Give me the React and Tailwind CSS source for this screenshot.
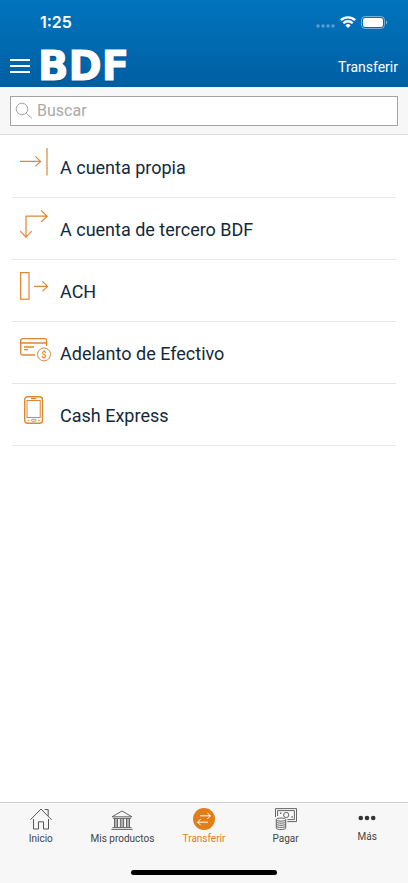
import { useState } from "react";

function OwnAccountIcon() {
  return (
    <svg viewBox="0 0 32 28" className="w-8 h-7" fill="none" stroke="#e08732" strokeWidth="1.2" aria-hidden="true">
      <path d="M0 13.4H20.5M15.4 8.4l5.2 5l-5.2 5M27 0v27.6" />
    </svg>
  );
}

function ThirdPartyIcon() {
  return (
    <svg viewBox="0 0 32 28" className="w-8 h-7" fill="none" stroke="#e08732" strokeWidth="1.2" aria-hidden="true">
      <path d="M6 27V6.2H27M21 .4l6.2 5.8L21 12M.3 21.2L6 27.2l5.8-6" />
    </svg>
  );
}

function AchIcon() {
  return (
    <svg viewBox="0 0 32 28" className="w-8 h-7" fill="none" stroke="#e08732" strokeWidth="1.2" aria-hidden="true">
      <rect x=".6" y=".6" width="8.4" height="26.6" />
      <path d="M14 14.4h13.4M22.4 9.4l5.2 5l-5.2 5" />
    </svg>
  );
}

function CashAdvanceIcon() {
  return (
    <svg viewBox="0 0 32 28" className="w-8 h-7" fill="none" stroke="#e08732" strokeWidth="1.4" aria-hidden="true">
      <path d="M15 21H2.8A2 2 0 0 1 .7 19V6.6a2 2 0 0 1 2-2H24.6a2 2 0 0 1 2 2V12M.7 9H26.6" />
      <path d="M4 13h10M4 15.6h4" />
      <circle cx="24" cy="20.4" r="6.5" strokeWidth="1" />
      <text x="24" y="23.8" textAnchor="middle" fontSize="9" fontWeight="500" fontFamily="Roboto, sans-serif" fill="#e08732" stroke="none">
        $
      </text>
    </svg>
  );
}

function PhoneIcon() {
  return (
    <svg viewBox="0 0 32 28" className="w-8 h-7" fill="none" stroke="#e08732" strokeWidth="1.4" aria-hidden="true">
      <rect x="4.7" y=".7" width="17.8" height="26.6" rx="3" />
      <rect x="7" y="4.5" width="13.2" height="17" strokeWidth="1" />
      <path d="M11 2.6h5.4" />
      <rect x="11.5" y="23.3" width="4.4" height="2" rx="1" strokeWidth="1" />
      <path d="M7.5 24.4h1.6M18.2 24.4h1.6" strokeWidth="1" />
    </svg>
  );
}

function HomeIcon() {
  return (
    <svg viewBox="0 0 22 22" className="size-[22px]" fill="none" stroke="#555" strokeWidth="1" aria-hidden="true">
      <path d="M.4 11.8L11 1l10.6 10.8M14.6 1.6h3.6v6.2" />
      <path d="M3.5 11v10h5v-7.2h5V21h5V11" />
    </svg>
  );
}

function BankIcon() {
  return (
    <svg viewBox="0 0 22 22" className="size-[22px]" fill="none" stroke="#666" strokeWidth="1" aria-hidden="true">
      <path d="M1 8.8L11 3l10 5.8zM2 10.4h18M1.4 19.6h19.2M.4 21.4h21.2" />
      <path d="M3.5 10.4v9M5 10.4v9M6.5 10.4v9M9.4 10.4v9M11 10.4v9M12.6 10.4v9M15.5 10.4v9M17 10.4v9M18.5 10.4v9" />
    </svg>
  );
}

function TransferIcon() {
  return (
    <svg viewBox="0 0 22 22" className="size-[22px]" fill="none" aria-hidden="true">
      <circle cx="11" cy="11" r="11" fill="#e27d17" />
      <path d="M7 7.8h10.4M14.4 4.8l3 3l-3 3M15 14.2H4.6M7.6 11.2l-3 3l3 3" stroke="#fff" strokeWidth="1" />
    </svg>
  );
}

function PayIcon() {
  return (
    <svg viewBox="0 0 22 22" className="size-[22px]" fill="none" stroke="#666" strokeWidth="1" aria-hidden="true">
      <path d="M.5 9V.6h21v13H12.4M2.6 8V2.6h16.8v9h-7" />
      <circle cx="11.2" cy="7" r="2.6" />
      <path d="M5 5.2h1.4M16.4 9h1.4" strokeWidth="1.6" />
      <ellipse cx="6" cy="11.6" rx="4.7" ry="1.6" fill="#f7f7f7" />
      <path d="M1.3 11.6V20c0 2 9.4 2 9.4 0v-8.4M1.3 13.7c0 2 9.4 2 9.4 0M1.3 15.8c0 2 9.4 2 9.4 0M1.3 17.9c0 2 9.4 2 9.4 0" />
    </svg>
  );
}

function MoreIcon() {
  return (
    <svg viewBox="0 0 22 20" className="w-[22px] h-5" fill="#333" aria-hidden="true">
      <circle cx="4.8" cy="10" r="2.3" />
      <circle cx="11" cy="10" r="2.3" />
      <circle cx="17.2" cy="10" r="2.3" />
    </svg>
  );
}

const options = [
  { label: "A cuenta propia", Icon: OwnAccountIcon },
  { label: "A cuenta de tercero BDF", Icon: ThirdPartyIcon },
  { label: "ACH", Icon: AchIcon },
  { label: "Adelanto de Efectivo", Icon: CashAdvanceIcon },
  { label: "Cash Express", Icon: PhoneIcon },
];

const tabs = [
  { label: "Inicio", Icon: HomeIcon },
  { label: "Mis productos", Icon: BankIcon },
  { label: "Transferir", Icon: TransferIcon },
  { label: "Pagar", Icon: PayIcon },
  { label: "Más", Icon: MoreIcon },
];

export default function App() {
  const [query, setQuery] = useState("");
  const [active, setActive] = useState("Transferir");

  const visible = options.filter((o) =>
    o.label.toLowerCase().includes(query.trim().toLowerCase())
  );

  return (
    <div className="min-h-screen flex flex-col bg-white font-[Roboto,sans-serif]">
      <header className="bg-gradient-to-b from-[#0074be] to-[#005fa2] text-white">
        <div className="h-11 flex items-center justify-between pl-10 pr-5">
          <span className="text-base font-semibold font-[Inter,sans-serif]">1:25</span>
          <div className="flex items-center gap-[5px]">
            <svg viewBox="0 0 19 12" className="w-[19px] h-3" fill="#5b9fd0" aria-hidden="true">
              <circle cx="2" cy="10" r="1.7" />
              <circle cx="7" cy="10" r="1.7" />
              <circle cx="12" cy="10" r="1.7" />
              <circle cx="17" cy="10" r="1.7" />
            </svg>
            <svg viewBox="0 0 16 12" className="w-4 h-3" fill="none" stroke="#fff" strokeWidth="2.3" aria-hidden="true">
              <path d="M.8 4.2a10.4 10.4 0 0 1 14.4 0M3.3 7.2a6.6 6.6 0 0 1 9.4 0" />
              <path d="M8 12L5.4 9.4a3.7 3.7 0 0 1 5.2 0z" fill="#fff" stroke="none" />
            </svg>
            <svg viewBox="0 0 27 13" className="w-[27px] h-[13px]" fill="none" aria-hidden="true">
              <rect x=".5" y=".5" width="23" height="12" rx="3.6" stroke="#fff" strokeOpacity=".45" />
              <rect x="2" y="2" width="20" height="9" rx="2.2" fill="#fff" />
              <path d="M25 4.6c1.7.6 1.7 3.2 0 3.8z" fill="#fff" fillOpacity=".5" />
            </svg>
          </div>
        </div>
        <div className="h-[43px] flex items-center px-[10px]">
          <button type="button" aria-label="Menú">
            <svg viewBox="0 0 20 16" className="w-5 h-4" stroke="#fff" strokeWidth="2" aria-hidden="true">
              <path d="M0 2h20M0 8h20M0 14h20" />
            </svg>
          </button>
          <span className="ml-2 text-[40px] leading-none font-bold font-['DejaVu_Sans',sans-serif] [-webkit-text-stroke:1px_white] [text-shadow:0_1px_2px_#00407a]">
            BDF
          </span>
          <h1 className="ml-auto pt-[2px] text-sm">Transferir</h1>
        </div>
      </header>

      <div className="bg-[#f7f7f7] border-b border-[#dcdcdc] px-[10px] pt-[9px] pb-2">
        <label className="flex items-center h-[30px] gap-1 pl-1 bg-white border border-[#a3a3a3]">
          <svg viewBox="0 0 18 18" className="size-[18px]" fill="none" stroke="#a8a8a8" strokeWidth="1" aria-hidden="true">
            <circle cx="7" cy="7" r="5.8" />
            <path d="M11.2 11.2l5.8 5.4" />
          </svg>
          <input
            type="text"
            aria-label="Buscar"
            placeholder="Buscar"
            value={query}
            onChange={(e) => setQuery(e.target.value)}
            className="flex-1 min-w-0 bg-transparent text-base text-[#14283c] placeholder-[#aaa] focus:outline-none"
          />
        </label>
      </div>

      <main className="flex-1 px-3 pt-px">
        <ul>
          {visible.map(({ label, Icon }) => (
            <li key={label} className="border-b border-[#e6e6e6]">
              <button
                type="button"
                className="w-full h-[61px] flex items-start gap-2 pl-2 pt-3 text-left"
              >
                <Icon />
                <span className="pt-[6px] text-lg text-[#14283c]">{label}</span>
              </button>
            </li>
          ))}
        </ul>
      </main>

      <footer className="bg-[#f7f7f7] border-t border-[#cfcfcf]">
        <nav className="grid grid-cols-5 pt-[5px] pb-6">
          {tabs.map(({ label, Icon }) => (
            <button
              key={label}
              type="button"
              onClick={() => setActive(label)}
              className={`flex flex-col items-center gap-[2px] text-[10px] leading-[14px] whitespace-nowrap ${
                active === label ? "text-[#e27d17]" : "text-[#444]"
              }`}
            >
              <Icon />
              {label}
            </button>
          ))}
        </nav>
        <div className="w-[146px] h-[5px] mx-auto mb-2 rounded-full bg-black" />
      </footer>
    </div>
  );
}
